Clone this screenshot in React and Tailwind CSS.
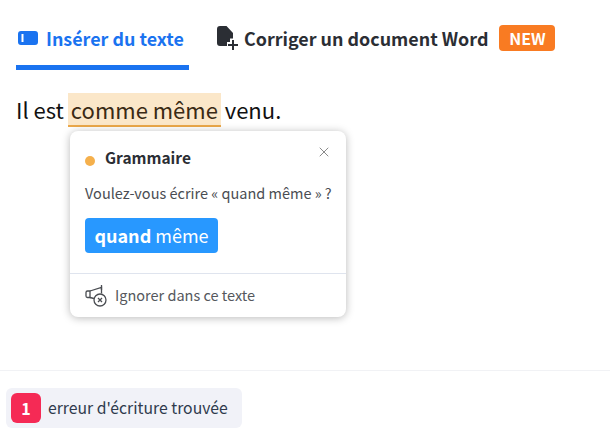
import React from 'react';
import { X } from 'lucide-react';

const font = { fontFamily: '"Noto Sans CJK SC", "Noto Sans", sans-serif' };

const TextIcon = () => (
  <svg width="20" height="14" viewBox="0 0 20 14">
    <path fillRule="evenodd" fill="#1a73f0" d="M3 0h14a3 3 0 0 1 3 3v8a3 3 0 0 1-3 3H3a3 3 0 0 1-3-3V3a3 3 0 0 1 3-3zM3.500 3v8h2V3z" />
  </svg>
);

const DocIcon = () => (
  <svg width="22" height="24" viewBox="0 0 22 24">
    <path fill="#2b2e34" d="M3 0h6.500L16 7v5.500h-3V16h-3v4H3a3 3 0 0 1-3-3V3a3 3 0 0 1 3-3z" />
    <path fill="#2b2e34" d="M15 14h2v4h4v2h-4v4h-2v-4h-4v-2h4z" />
  </svg>
);

const IgnoreIcon = () => (
  <svg width="22" height="23" viewBox="0 0 22 23" fill="none" stroke="#4a4d52" strokeWidth="1.300">
    <path d="M5 7h-2.500a1.500 1.500 0 0 0-1.500 1.500v3.500a1.500 1.500 0 0 0 1.500 1.500h2.500z" />
    <path d="M5 7 16.500 3.500v6M5 13.500l4 1" />
    <path d="M16.500 1v5" />
    <circle cx="15" cy="16" r="6" />
    <path d="M13 14l4 4M17 14l-4 4" />
  </svg>
);

export default function App() {
  return (
    <div className="relative flex h-[432px] w-[610px] flex-col overflow-hidden bg-white" style={font}>
      <div className="flex h-[70px] items-start px-4">
        <div className="flex h-[70px] w-[173px] items-center gap-[8px] border-b-[5px] border-[#1a73f0] pl-[2px] pt-[10px]">
          <TextIcon />
          <span className="whitespace-nowrap text-[17.900px] font-semibold leading-[26px] text-[#1a73f0]">Insérer du texte</span>
        </div>
        <div className="ml-[28px] flex h-[70px] items-center pt-[6px]">
          <DocIcon />
          <span className="ml-[5px] whitespace-nowrap text-[17.900px] font-semibold leading-[26px] text-[#2b2e34]">Corriger un document Word</span>
          <span className="ml-[11px] flex h-[26px] w-[56px] items-center justify-center rounded bg-[#f97b22] text-[16px] font-bold leading-none text-white">NEW</span>
        </div>
      </div>

      <div className="mt-[23px] flex h-[34px] items-start px-4 text-[22px] leading-[32px] text-[#111]">
        <span className="whitespace-pre">Il est </span>
        <span className="-ml-[1px] h-[34px] border-b-2 border-[#eba84a] bg-[#fbe7c9] px-[3px] text-[#3a2a14]">comme même</span>
        <span className="-ml-[1px] whitespace-pre"> venu.</span>
      </div>

      <div className="absolute left-[70px] top-[131px] h-[186px] w-[276px] rounded-lg bg-white shadow-[0_1px_8px_rgba(0,0,0,0.28)]">
        <div className="flex items-center px-[15px] pt-[15px]">
          <span className="mt-[7px] size-[10px] rounded-full bg-[#f5b04c]" />
          <span className="ml-[10px] text-[15.500px] font-semibold leading-[22px] text-[#2b2e34]">Grammaire</span>
          <X className="ml-auto -mr-[1px] -mt-[10px] size-[16px] text-[#777]" strokeWidth={1.3} />
        </div>
        <p className="mt-[14px] whitespace-nowrap px-[15px] text-[14.500px] leading-[22px] text-[#4a4d52]">Voulez-vous écrire « quand même » ?</p>
        <div className="mt-[14px] px-[15px]">
          <button className="h-[35px] w-[133px] rounded bg-[#2898ff] text-[18px] leading-[33px] text-white">
            <strong className="font-bold">quand</strong> même
          </button>
        </div>
        <div className="mt-[20px] flex h-[44px] items-center gap-[8px] border-t border-[#dfe4ee] px-[15px]">
          <IgnoreIcon />
          <span className="pb-[2px] text-[14.500px] leading-[22px] text-[#55585d]">Ignorer dans ce texte</span>
        </div>
      </div>

      <div className="mt-auto h-[62px] border-t border-[#f1f2f5] px-[6px] pt-[17px]">
        <div className="flex h-[40px] w-[236px] items-center gap-[7px] rounded-md bg-[#f1f2f8] pl-[5px]">
          <span className="flex size-[30px] items-center justify-center rounded-md bg-[#f52a55] text-[16px] font-bold leading-none text-white">1</span>
          <span className="whitespace-nowrap text-[15.750px] leading-[24px] text-[#2f3a4d]">erreur d'écriture trouvée</span>
        </div>
      </div>
    </div>
  );
}
